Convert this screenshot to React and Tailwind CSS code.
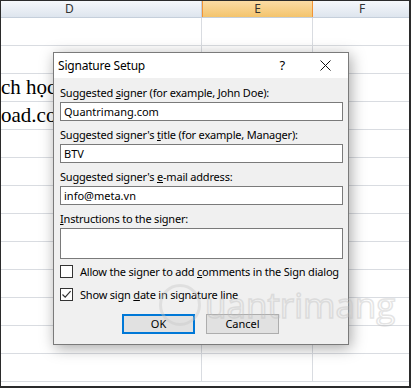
import React from 'react';

const ui = { fontFamily: '"Noto Sans", "Open Sans", sans-serif' };

function Field({ label, value, tall }) {
  return (
    <div className="mb-[6px]">
      <div className="h-[16px] leading-[16px] mb-[1px] text-[11px] tracking-[-0.2px] text-black whitespace-nowrap">{label}</div>
      <div
        className={`${tall ? 'h-[31px]' : 'h-[19px]'} border border-[#7a7a7a] bg-white pl-[3px] text-[11px] leading-[17px] text-black`}
      >
        {value}
      </div>
    </div>
  );
}

function Checkbox({ checked, children }) {
  return (
    <div className="flex items-center h-[13px]">
      <div className="shrink-0 w-[13px] h-[13px] border border-[#333] bg-white flex items-center justify-center">
        {checked && (
          <svg width="11" height="11" viewBox="0 0 11 11">
            <path d="M1.5 5.5 L4.2 8.2 L9.6 2.2" fill="none" stroke="#333" strokeWidth="1.2" />
          </svg>
        )}
      </div>
      <span className="ml-[7px] text-[11px] tracking-[-0.2px] leading-[16px] text-black whitespace-nowrap">{children}</span>
    </div>
  );
}

export default function App() {
  const rows = Array.from({ length: 13 });
  return (
    <div className="relative w-[411px] h-[388px] overflow-hidden bg-white border-l border-t border-r-2 border-b-2 border-[#2b2b2b]">
      {/* Column headers */}
      <div className="flex h-[17px] border-b border-[#c5cfdb] text-[12px] leading-[16px]" style={ui}>
        <div className="w-[201px] bg-gradient-to-b from-[#f6f8fb] to-[#dee5ee] border-r border-[#c5cfdb] text-[#333] pl-[64px]">D</div>
        <div className="w-[111px] bg-gradient-to-b from-[#fbdca4] to-[#f3c46c] border-x border-[#f29436] text-center text-[#333]">E</div>
        <div className="flex-1 bg-gradient-to-b from-[#f6f8fb] to-[#dee5ee] text-center text-[#333] pl-[2px]">F</div>
      </div>

      {/* Grid */}
      <div>
        {rows.map((_, i) => (
          <div key={i} className="flex h-[28px] border-b border-[#d9dce1]">
            <div className="w-[201px] border-r border-[#d9dce1] whitespace-nowrap overflow-hidden text-[21px] leading-[27px] text-black" style={{ fontFamily: '"Liberation Serif", serif' }}>
              {i === 2 ? 'ch học Excel' : i === 3 ? 'oad.com.vn' : ''}
            </div>
            <div className="w-[111px] border-r border-[#d9dce1]" />
            <div className="flex-1" />
          </div>
        ))}
      </div>

      {/* Dialog */}
      <div
        className="absolute left-[52px] top-[51px] w-[296px] h-[293px] border border-[#7a7a7a] bg-[#f0f0f0] shadow-[2px_3px_14px_rgba(0,0,0,0.35)] flex flex-col"
        style={ui}
      >
        <div className="h-[25px] bg-white flex items-center pl-[4px] text-[12px] tracking-[-0.2px] text-black">
          <span>Signature Setup</span>
          <span className="ml-auto mr-[35px] text-[13px]">?</span>
          <svg width="11" height="11" viewBox="0 0 11 11" className="mr-[17px]">
            <path d="M0.5 0.5 L10.5 10.5 M10.5 0.5 L0.5 10.5" stroke="#111" strokeWidth="1" />
          </svg>
        </div>
        <div className="flex-1 pl-[6px] pr-[5px] pt-[7px]">
          <Field label={<>Suggested <u>s</u>igner (for example, John Doe):</>} value="Quantrimang.com" />
          <Field label={<>Suggested signer's <u>t</u>itle (for example, Manager):</>} value="BTV" />
          <Field label={<>Suggested signer's <u>e</u>-mail address:</>} value="info@meta.vn" />
          <Field label={<><u>I</u>nstructions to the signer:</>} value="" tall />
          <div className="mt-[1px] flex flex-col gap-[10px]">
            <Checkbox>Allow the signer to add <u>c</u>omments in the Sign dialog</Checkbox>
            <Checkbox checked>Show sign <u>d</u>ate in signature line</Checkbox>
          </div>
          <div className="mt-[13px] flex pl-[62px] gap-[11px] text-[11px]">
            <div className="w-[73px] h-[20px] border-2 border-[#0078d7] bg-[#e1e1e1] flex items-center justify-center text-black">OK</div>
            <div className="w-[73px] h-[20px] border border-[#adadad] bg-[#e1e1e1] flex items-center justify-center text-black">Cancel</div>
          </div>
        </div>
      </div>

      {/* Watermark */}
      <div className="absolute left-[158px] top-[283px] flex items-center pointer-events-none opacity-40">
        <div className="w-[42px] h-[42px] rounded-full border-[3px] border-[#c8c8c8]" />
        <span
          className="ml-[4px] text-[35px] leading-[42px] text-transparent [-webkit-text-stroke:1.5px_#bdbdbd]"
          style={{ fontFamily: '"Open Sans", sans-serif' }}
        >
          uantrimang
        </span>
      </div>
    </div>
  );
}
